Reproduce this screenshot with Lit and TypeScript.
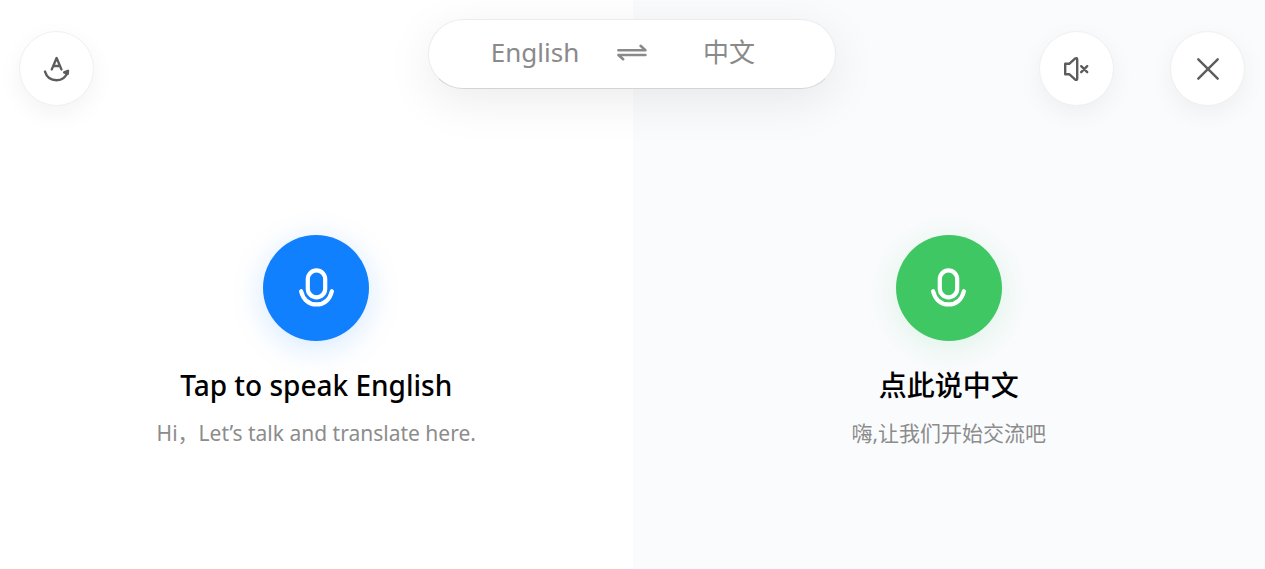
import { LitElement, html, css, svg } from "lit";
import { customElement, property, state } from "lit/decorators.js";

const micIcon = svg`
  <rect x="12.8" y="3.4" width="17.4" height="27" rx="8.7" />
  <path d="M6.1 24.2C8.2 32.8 14 37.4 21.5 37.4s13.3-4.6 15.4-13.2" />
`;

@customElement("speak-panel")
class SpeakPanel extends LitElement {
  @property() heading = "";
  @property() hint = "";
  @property() tone = "blue";

  static styles = css`
    :host {
      display: flex;
      flex-direction: column;
      align-items: center;
      box-sizing: border-box;
      padding: 235px 24px 48px;
      text-align: center;
    }
    .mic {
      display: grid;
      place-items: center;
      width: 106px;
      height: 106px;
      padding: 0;
      border: 0;
      border-radius: 50%;
      cursor: pointer;
    }
    .blue {
      background: #1080ff;
      box-shadow: 0 6px 32px rgba(16, 128, 255, 0.18);
    }
    .green {
      background: #3fc764;
      box-shadow: 0 6px 32px rgba(63, 199, 100, 0.16);
    }
    svg {
      width: 43px;
      height: 43px;
      fill: none;
      stroke: #fff;
      stroke-width: 4.2;
      stroke-linecap: round;
    }
    h2 {
      margin: 24px 0 0;
      font-size: 28px;
      line-height: 40px;
      font-weight: 500;
      color: #000;
    }
    p {
      margin: 12px 0 0;
      font-size: 21px;
      line-height: 32px;
      color: #8c8c8c;
    }
  `;

  render() {
    return html`
      <button class="mic ${this.tone}" aria-label=${this.heading}>
        <svg viewBox="0 0 43 43" aria-hidden="true">${micIcon}</svg>
      </button>
      <h2>${this.heading}</h2>
      <p>${this.hint}</p>
    `;
  }
}

@customElement("app-root")
class AppRoot extends LitElement {
  @state() private languages = ["English", "中文"];

  static styles = css`
    :host {
      display: grid;
      min-height: 100vh;
      font-family: "Noto Sans", "Noto Sans CJK SC", sans-serif;
    }
    .panels,
    .bar {
      grid-area: 1 / 1;
    }
    .panels {
      display: grid;
      grid-template-columns: 1fr 1fr;
    }
    .second {
      background: #fafbfd;
    }
    .bar {
      z-index: 1;
      align-self: start;
      display: grid;
      grid-template-columns: 1fr minmax(0, 408px) 1fr;
      align-items: start;
      padding: 19px 20px 0 19px;
    }
    .side {
      display: flex;
      gap: 56px;
      padding-top: 12px;
    }
    .end {
      justify-content: flex-end;
    }
    button {
      font: inherit;
      cursor: pointer;
    }
    .round {
      display: grid;
      place-items: center;
      box-sizing: border-box;
      width: 75px;
      height: 75px;
      padding: 0;
      border: 1px solid #f0f0f1;
      border-radius: 50%;
      background: #fff;
      box-shadow: 0 8px 24px rgba(0, 0, 0, 0.05);
    }
    .languages {
      display: grid;
      grid-template-columns: 1fr auto 1fr;
      align-items: center;
      box-sizing: border-box;
      height: 70px;
      padding: 0 24px 4px;
      border: 1px solid #ececed;
      border-bottom-color: #d4d4d5;
      border-radius: 35px;
      background: #fff;
      box-shadow: 0 12px 48px rgba(0, 0, 0, 0.08);
    }
    .languages button {
      padding: 0;
      border: 0;
      background: none;
      color: #8a8a8a;
      font-size: 26px;
      line-height: 36px;
    }
    .languages .swap {
      display: grid;
    }
    svg {
      fill: none;
      stroke: #5c5c5c;
      stroke-width: 2.4;
      stroke-linecap: round;
      stroke-linejoin: round;
    }
    .swap svg {
      stroke: #8a8a8a;
      stroke-width: 2.6;
    }
  `;

  private swap() {
    this.languages = [...this.languages].reverse();
  }

  render() {
    return html`
      <header class="bar">
        <div class="side">
          <button class="round" aria-label="Translation direction">
            <svg width="30" height="30" viewBox="0 0 30 30">
              <path d="M9.8 15.4 14.6 4l4.8 11.4M11.5 12h6.2" />
              <path d="M3 17.6C4.7 23.2 9.1 26.2 14.5 26.2c5.2 0 9.4-2.9 11-8.2" />
              <path d="M22.2 18.4 26 16.8 25.6 20Z" />
            </svg>
          </button>
        </div>
        <nav class="languages" aria-label="Languages">
          <button>${this.languages[0]}</button>
          <button class="swap" aria-label="Swap languages" @click=${this.swap}>
            <svg width="30" height="20" viewBox="0 0 30 20">
              <path d="M1.4 8.2h27l-4.8-4.4M28.4 13h-27l4.8 4.2" />
            </svg>
          </button>
          <button>${this.languages[1]}</button>
        </nav>
        <div class="side end">
          <button class="round" aria-label="Mute">
            <svg width="30" height="30" viewBox="0 0 30 30">
              <path d="M3.2 9.8h4L13 4.6Q15.2 3.2 15.2 5.6V24.4Q15.2 26.8 13 25.4L7.2 20.2h-4Z" />
              <path d="M19.2 12.2 25.2 18.2M25.2 12.2 19.2 18.2" />
            </svg>
          </button>
          <button class="round" aria-label="Close">
            <svg width="30" height="30" viewBox="0 0 30 30">
              <path d="M5.3 5.3 24.7 24.7M24.7 5.3 5.3 24.7" />
            </svg>
          </button>
        </div>
      </header>
      <main class="panels">
        <speak-panel
          heading="Tap to speak English"
          hint="Hi，Let’s talk and translate here."
          tone="blue"
        ></speak-panel>
        <speak-panel
          class="second"
          lang="zh-CN"
          heading="点此说中文"
          hint="嗨,让我们开始交流吧"
          tone="green"
        ></speak-panel>
      </main>
    `;
  }
}
